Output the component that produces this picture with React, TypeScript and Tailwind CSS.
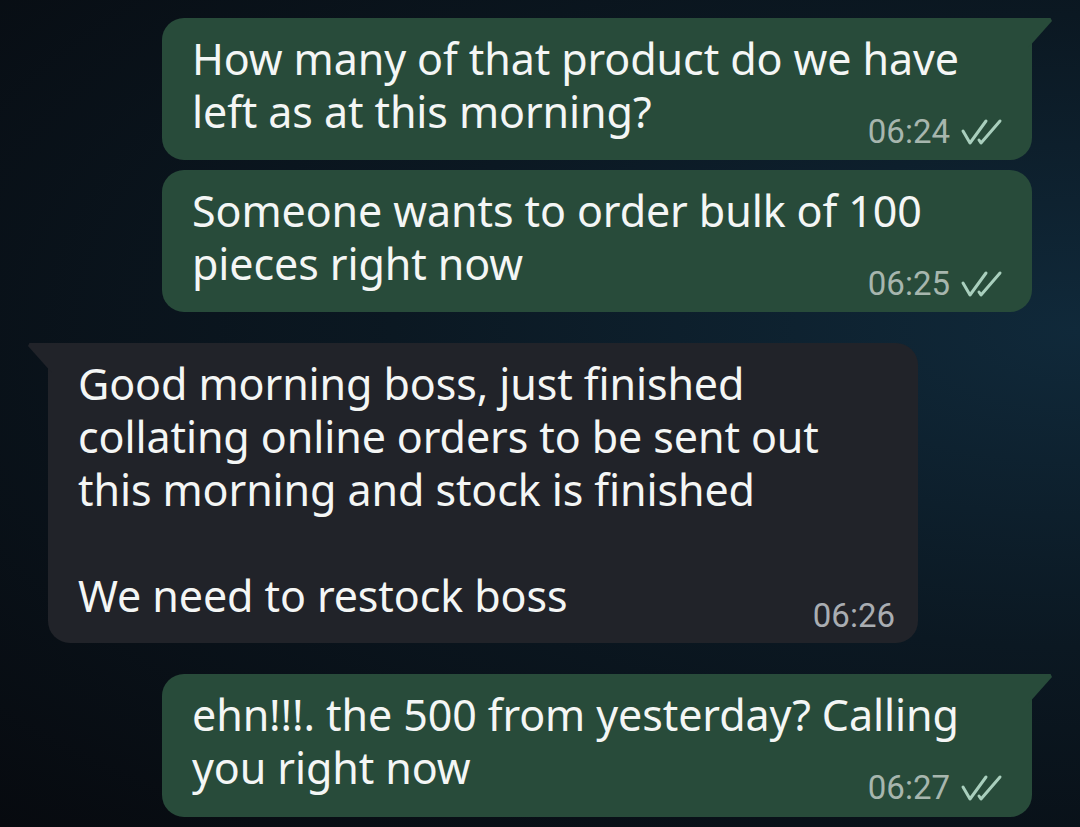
import React from "react";

type Msg = {
  out: boolean;
  lines: string[];
  time: string;
  tail?: boolean;
  gap: string;
  pb: string;
};

const messages: Msg[] = [
  {
    out: true,
    tail: true,
    lines: ["How many of that product do we have", "left as at this morning?"],
    time: "06:24",
    gap: "mt-[18px]",
    pb: "pb-[11px]",
  },
  {
    out: true,
    lines: ["Someone wants to order bulk of 100", "pieces right now"],
    time: "06:25",
    gap: "mt-[10px]",
    pb: "pb-[11px]",
  },
  {
    out: false,
    tail: true,
    lines: [
      "Good morning boss, just finished",
      "collating online orders to be sent out",
      "this morning and stock is finished",
      "",
      "We need to restock boss",
    ],
    time: "06:26",
    gap: "mt-[31px]",
    pb: "pb-[10px]",
  },
  {
    out: true,
    tail: true,
    lines: ["ehn!!!. the 500 from yesterday? Calling", "you right now"],
    time: "06:27",
    gap: "mt-[31px]",
    pb: "pb-[12px]",
  },
];

function Ticks() {
  return (
    <svg
      width="44"
      height="28"
      viewBox="0 0 44 28"
      fill="none"
      stroke="#a9cfbd"
      strokeWidth="3"
      strokeLinecap="round"
      strokeLinejoin="round"
    >
      <path d="M3 13 L10 25 L26 3" />
      <path d="M19 22 L21 25 L40 3" />
    </svg>
  );
}

function Bubble({ m }: { m: Msg }) {
  const wrap = m.out ? "ml-[162px]" : "ml-[48px]";
  const side = m.out ? "bg-[#284b3a] pr-[28px]" : "bg-[#212329] pr-[23px]";
  const corner = m.tail ? (m.out ? "rounded-tr-none" : "rounded-tl-none") : "";
  return (
    <div className={`relative w-[870px] ${wrap} ${m.gap}`}>
      {m.tail && m.out && (
        <div className="absolute -right-[20px] top-0 h-[30px] w-[24px] bg-[#284b3a] [clip-path:polygon(0_0,94%_0,100%_10%,0_100%)]" />
      )}
      {m.tail && !m.out && (
        <div className="absolute -left-[20px] top-0 h-[30px] w-[24px] bg-[#212329] [clip-path:polygon(6%_0,100%_0,100%_100%,0_10%)]" />
      )}
      <div
        className={`flex flex-col rounded-[22px] ${corner} ${side} pl-[30px] pt-[14px] ${m.pb} text-[43px] leading-[53px] tracking-[-0.1px] text-[#f4f6f5] font-['Noto_Sans',sans-serif]`}
      >
        {m.lines.map((l, i) => (
          <div key={i} className="whitespace-pre">
            {l || "\u00a0"}
          </div>
        ))}
        <div className="-mt-[23px] flex h-[34px] items-center justify-end gap-[10px]">
          <span
            className={`font-['Roboto',sans-serif] text-[33px] leading-[34px] tracking-normal ${m.out ? "text-[#a7b6ae]" : "text-[#a9adb2]"}`}
          >
            {m.time}
          </span>
          {m.out && <Ticks />}
        </div>
      </div>
    </div>
  );
}

export default function App() {
  return (
    <div className="h-[827px] w-[1080px] overflow-hidden bg-[radial-gradient(ellipse_at_100%_40%,#10293a_0%,#0b1822_45%,#070a0f_100%)]">
      <div className="flex flex-col">
        {messages.map((m, i) => (
          <Bubble key={i} m={m} />
        ))}
      </div>
    </div>
  );
}
